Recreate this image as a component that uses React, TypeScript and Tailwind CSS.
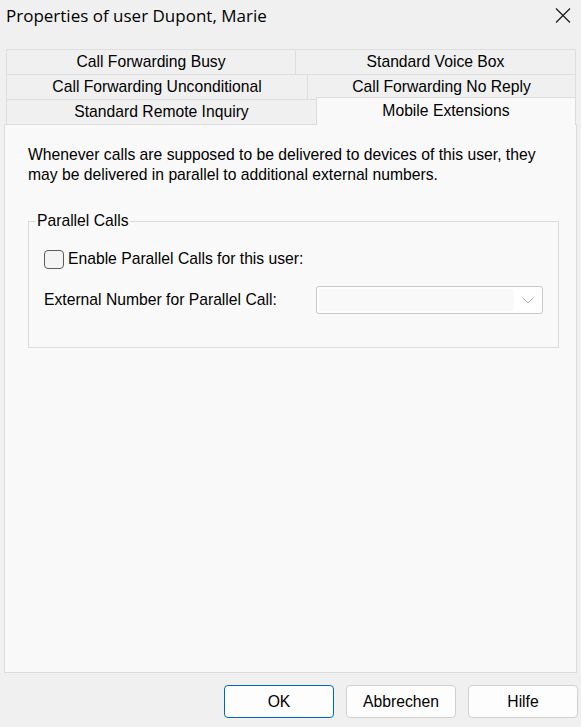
import { useState } from "react";

const font = { fontFamily: '"Liberation Sans", Arial, sans-serif' };

function Tab({ label, w, selected }: { label: string; w: string; selected?: boolean }) {
  if (selected) {
    return (
      <div
        className={`${w} h-[28px] -mt-[2px] -mb-[1px] relative z-10 flex items-center justify-center bg-[#f9f9f9] border border-b-0 border-[#dcdcdc] text-[15.7px] text-black pb-[2px]`}
      >
        {label}
      </div>
    );
  }
  return (
    <div
      className={`${w} h-[25px] flex items-center justify-center bg-[#f0f0f0] border-t border-l border-[#dedede] text-[15.7px] text-black`}
    >
      {label}
    </div>
  );
}

export default function App() {
  const [enabled, setEnabled] = useState(false);

  return (
    <div
      className="w-[581px] h-[727px] bg-[#f0f0f0] flex flex-col overflow-hidden select-none"
      style={font}
    >
      {/* Title bar */}
      <div className="h-[31px] flex items-center justify-between pl-[6px] pr-[10px]">
        <span className="text-[17px] text-black font-['Open_Sans',sans-serif]">Properties of user Dupont, Marie</span>
        <svg width="16" height="15" viewBox="0 0 16 15" className="mt-[-1px]">
          <path d="M1 0.5 L15 14.5 M15 0.5 L1 14.5" stroke="#1a1a1a" strokeWidth="1.2" fill="none" />
        </svg>
      </div>

      {/* Tabs */}
      <div className="pt-[18px] pl-[6px] flex flex-col">
        <div className="flex w-[570px] border-r border-[#dedede]">
          <Tab label="Call Forwarding Busy" w="w-[289px]" />
          <Tab label="Standard Voice Box" w="flex-1" />
        </div>
        <div className="flex w-[570px] border-r border-[#dedede]">
          <Tab label="Call Forwarding Unconditional" w="w-[301px]" />
          <Tab label="Call Forwarding No Reply" w="flex-1" />
        </div>
        <div className="flex items-start w-[570px]">
          <Tab label="Standard Remote Inquiry" w="w-[310px]" />
          <Tab label="Mobile Extensions" w="w-[260px]" selected />
        </div>
      </div>

      {/* Tab panel */}
      <div className="ml-[4px] w-[573px] h-[549px] bg-[#f9f9f9] border border-[#dcdcdc] pt-[20px] px-[23px] text-[15.7px]">
        <p className="leading-[20px] text-black">
          Whenever calls are supposed to be delivered to devices of this user, they
          <br />
          may be delivered in parallel to additional external numbers.
        </p>

        <fieldset className="mt-[26px] w-[531px] border border-[#dcdcdc] px-[15px] pb-[33px]">
          <legend className="-ml-[8px] px-[1px] leading-[20px] text-black">Parallel Calls</legend>

          <label className="mt-[18px] flex items-center h-[20px] gap-[4px]">
            <span
              onClick={() => setEnabled(!enabled)}
              className="w-[20px] h-[19px] rounded-[4px] border border-[#5c5c5c] bg-[#f4f4f4] flex items-center justify-center"
            >
              {enabled && (
                <svg width="12" height="10" viewBox="0 0 12 10">
                  <path d="M1 5 L4.5 8.5 L11 1.5" stroke="#000" strokeWidth="1.4" fill="none" />
                </svg>
              )}
            </span>
            <span className="text-black">Enable Parallel Calls for this user:</span>
          </label>

          <div className="mt-[17px] flex items-center">
            <span className="w-[272px] text-black">External Number for Parallel Call:</span>
            <div className="w-[227px] h-[28px] border border-[#c8c8c8] rounded-[3px] bg-white flex items-center pl-[2px]">
              <div className="w-[195px] h-[22px] bg-[#f9f9f9]" />
              <div className="flex-1 flex items-center justify-center">
                <svg width="12" height="7" viewBox="0 0 12 7">
                  <path d="M0.5 0.5 L6 6 L11.5 0.5" stroke="#a8a8a8" strokeWidth="1" fill="none" />
                </svg>
              </div>
            </div>
          </div>
        </fieldset>
      </div>

      {/* Buttons */}
      <div className="mt-[12px] flex justify-end gap-[12px] pr-[3px]">
        <button className="w-[110px] h-[33px] rounded-[4px] border border-[#0067c0] bg-[#fdfdfd] text-[15.7px] text-black">
          OK
        </button>
        <button className="w-[110px] h-[33px] rounded-[4px] border border-[#d0d0d0] bg-[#fdfdfd] text-[15.7px] text-black">
          Abbrechen
        </button>
        <button className="w-[110px] h-[33px] rounded-[4px] border border-[#d0d0d0] bg-[#fdfdfd] text-[15.7px] text-black">
          Hilfe
        </button>
      </div>
    </div>
  );
}
